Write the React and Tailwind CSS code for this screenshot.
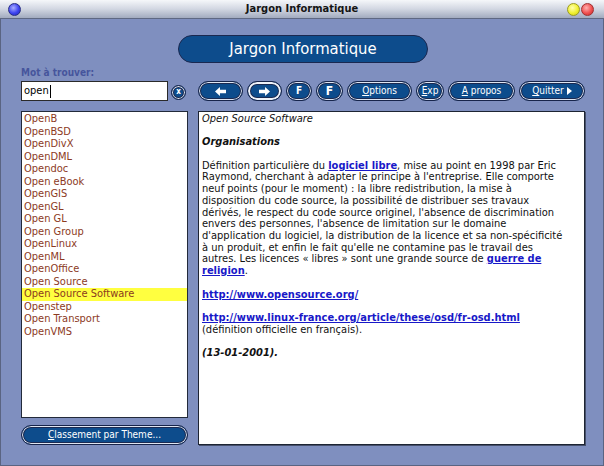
import React from "react";

function Btn({ className = "", focus = false, children }) {
  return (
    <div
      className={
        "flex h-[20px] shrink-0 items-center justify-center rounded-full border border-[#17244a] bg-[#0d4c8c] text-[10px] leading-none text-white " +
        (focus
          ? "shadow-[inset_0_0_0_2px_#eef2f9,inset_0_0_0_3px_#1a2a52] "
          : "shadow-[inset_0_0_0_1px_#dfe6f2,inset_0_0_0_2px_#1a2a52] ") +
        className
      }
    >
      {children}
    </div>
  );
}

function A({ children }) {
  return <span className="font-bold text-[#1818c8] underline underline-offset-[1px]">{children}</span>;
}

const items = [
  "OpenB",
  "OpenBSD",
  "OpenDivX",
  "OpenDML",
  "Opendoc",
  "Open eBook",
  "OpenGIS",
  "OpenGL",
  "Open GL",
  "Open Group",
  "OpenLinux",
  "OpenML",
  "OpenOffice",
  "Open Source",
  "Open Source Software",
  "Openstep",
  "Open Transport",
  "OpenVMS",
];

export default function App() {
  return (
    <div className="flex h-[466px] w-[604px] flex-col overflow-hidden font-['DejaVu_Sans_Condensed','DejaVu_Sans',sans-serif] font-stretch-semi-condensed">
      {/* title bar */}
      <div className="flex h-[19px] shrink-0 items-center border-b border-[#5e6883] bg-linear-to-b from-[#f5f7fa] via-[#d2d7e2] to-[#a2abbf]">
        <div className="flex w-[50px] pl-[8px]">
          <div className="h-[13px] w-[13px] rounded-full border border-[#262c86] bg-[radial-gradient(circle_at_40%_35%,#a9aeff,#3d43f0_55%,#2128b0)]" />
        </div>
        <div className="flex-1 text-center font-['Liberation_Sans_Narrow','DejaVu_Sans_Condensed',sans-serif] text-[11px] font-bold text-[#141414]">
          Jargon Informatique
        </div>
        <div className="flex w-[50px] justify-end gap-[1px] pr-[10px]">
          <div className="h-[13px] w-[13px] rounded-full border border-[#9a9a20] bg-[radial-gradient(circle_at_40%_35%,#ffffb0,#f0f030_55%,#c8c818)]" />
          <div className="h-[13px] w-[13px] rounded-full border border-[#a03030] bg-[radial-gradient(circle_at_40%_35%,#ffb0b0,#f05050_55%,#c02828)]" />
        </div>
      </div>

      {/* body */}
      <div className="flex flex-1 flex-col border-x border-b border-[#5a6482] bg-[#7f8fbf] pl-[20px] pr-[18px]">
        <div className="mt-[16px] flex h-[28px] w-[250px] items-center justify-center self-center rounded-full border border-[#1a2850] bg-[#0d4c8c] text-[16.5px] text-white">
          Jargon Informatique
        </div>

        <div className="mt-[4px] h-[12px] text-[10px] font-bold leading-[12px] text-[#46559c]">Mot à trouver:</div>

        <div className="mt-[2px] grid grid-cols-[167px_387px] grid-rows-[20px_334px] gap-x-[10px] gap-y-[10px]">
          {/* input row */}
          <div className="flex items-center">
            <div className="flex h-[20px] w-[147px] items-center border border-[#2a2a2a] bg-white pl-[2px] text-[11px] text-black">
              open
              <span className="ml-[1px] h-[13px] w-[1px] bg-black" />
            </div>
            <div className="ml-[3px] mt-[2px] flex h-[15px] w-[15px] items-center justify-center rounded-full border border-[#17244a] bg-[#0d4c8c] text-[8px] font-bold leading-none text-white shadow-[inset_0_0_0_1px_#dfe6f2,inset_0_0_0_2px_#1a2a52]">
              x
            </div>
          </div>

          <div className="flex items-center gap-[4px]">
            <Btn className="w-[45px]">
              <svg width="11" height="9" viewBox="0 0 10 8">
                <path d="M0 4 L4.5 0 V2.3 H10 V5.7 H4.5 V8 Z" fill="white" />
              </svg>
            </Btn>
            <Btn className="w-[35px]" focus>
              <svg width="11" height="9" viewBox="0 0 10 8">
                <path d="M10 4 L5.5 0 V2.3 H0 V5.7 H5.5 V8 Z" fill="white" />
              </svg>
            </Btn>
            <Btn className="w-[26px] text-[9px] font-bold">F</Btn>
            <Btn className="w-[27px] text-[12px] font-bold">F</Btn>
            <Btn className="w-[65px]">
              <span>
                <span className="underline">O</span>ptions
              </span>
            </Btn>
            <Btn className="w-[28px]">
              <span>
                <span className="underline">E</span>xp
              </span>
            </Btn>
            <Btn className="w-[67px]">
              <span>
                <span className="underline">A</span> propos
              </span>
            </Btn>
            <Btn className="w-[66px]">
              <span>
                <span className="underline">Q</span>uitter
              </span>
              <svg className="ml-[3px]" width="5" height="8" viewBox="0 0 5 8">
                <path d="M0 0 L5 4 L0 8 Z" fill="white" />
              </svg>
            </Btn>
          </div>

          {/* left column */}
          <div className="flex flex-col gap-[7px]">
            <div className="h-[307px] overflow-hidden border border-[#222a3a] bg-white pt-[1px] text-[11px] leading-[12.5px] text-[#8c3a1e]">
              {items.map((it) => (
                <div key={it} className={"pl-[2px] " + (it === "Open Source Software" ? "bg-[#ffff40]" : "")}>
                  {it}
                </div>
              ))}
            </div>
            <Btn className="w-[167px]">
              <span>
                <span className="underline">C</span>lassement par Theme...
              </span>
            </Btn>
          </div>

          {/* right panel */}
          <div className="overflow-hidden border border-[#1d2433] bg-white pl-[3px] pt-[1px] text-[11px] leading-[11.7px] whitespace-nowrap text-[#111] shadow-[1px_1px_0_#46506c]">
            <div className="italic">Open Source Software</div>
            <div className="h-[11.7px]" />
            <div className="font-bold italic">Organisations</div>
            <div className="h-[11.7px]" />
            <div>
              Définition particulière du <A>logiciel libre</A>, mise au point en 1998 par Eric
            </div>
            <div>Raymond, cherchant à adapter le principe à l'entreprise. Elle comporte</div>
            <div>neuf points (pour le moment) : la libre redistribution, la mise à</div>
            <div>disposition du code source, la possibilité de distribuer ses travaux</div>
            <div>dérivés, le respect du code source originel, l'absence de discrimination</div>
            <div>envers des personnes, l'absence de limitation sur le domaine</div>
            <div>d'application du logiciel, la distribution de la licence et sa non-spécificité</div>
            <div>à un produit, et enfin le fait qu'elle ne contamine pas le travail des</div>
            <div>
              autres. Les licences « libres » sont une grande source de <A>guerre de </A>
            </div>
            <div>
              <A>religion</A>.
            </div>
            <div className="h-[11.7px]" />
            <div>
              <A>http://www.opensource.org/</A>
            </div>
            <div className="h-[11.7px]" />
            <div>
              <A>http://www.linux-france.org/article/these/osd/fr-osd.html</A>
            </div>
            <div>(définition officielle en français).</div>
            <div className="h-[11.7px]" />
            <div className="font-bold italic">(13-01-2001).</div>
          </div>
        </div>
      </div>
    </div>
  );
}
